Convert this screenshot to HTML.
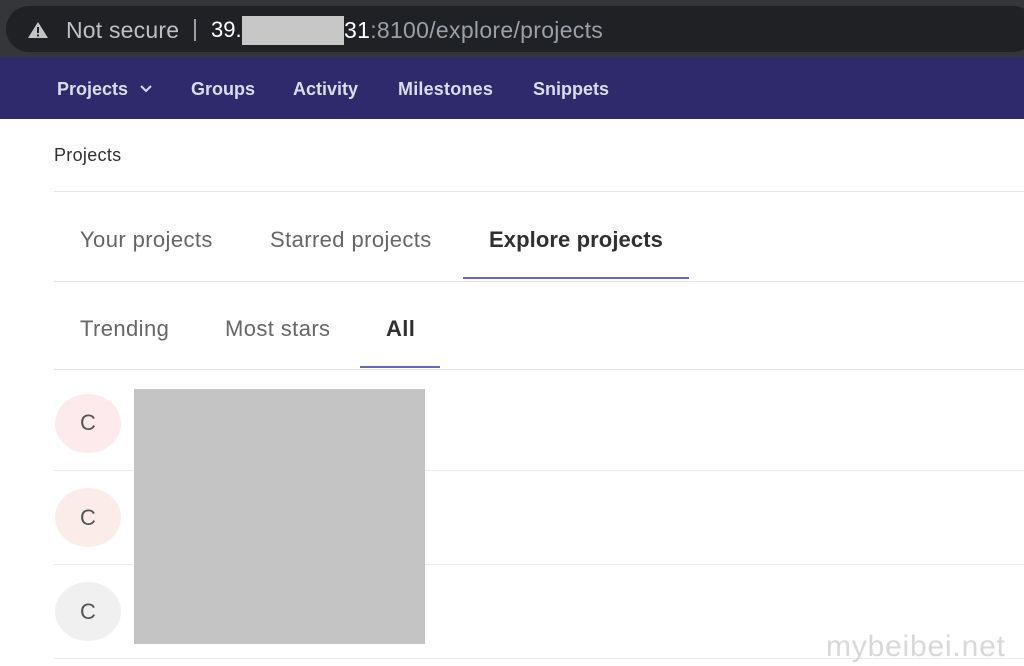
<!DOCTYPE html>
<html><head><style>
*{margin:0;padding:0;box-sizing:border-box}
body{width:1024px;height:666px;overflow:hidden;background:#fff;font-family:"Liberation Sans",sans-serif;position:relative}
.a{position:absolute}
.t{position:absolute;white-space:nowrap}
.tab{font-size:22px;letter-spacing:0.4px}
</style></head><body>
<div class="a" style="left:0;top:0;width:1024px;height:57px;background:#35363a"></div>
<div class="a" style="left:6px;top:6px;width:1030px;height:46px;background:#202124;border-radius:23px"></div>
<svg class="a" style="left:27px;top:21px" width="22" height="18" viewBox="0 0 22 18"><path d="M11 1L21 17H1Z" fill="#c4c4c4"/><rect x="10" y="6" width="2" height="6" fill="#202124"/><rect x="10" y="13.5" width="2" height="2" fill="#202124"/></svg>
<div class="t" style="left:66px;top:17px;font-size:23px;color:#bdc1c6;letter-spacing:0.2px">Not secure</div>
<div class="a" style="left:194px;top:19px;width:2px;height:22px;background:#9aa0a6"></div>
<div class="t" style="left:211px;top:17px;font-size:22px;color:#fff">39.</div>
<div class="a" style="left:242px;top:16px;width:102px;height:29px;background:#c7c7c7"></div>
<div class="t" style="left:344px;top:17px;font-size:23px;color:#fff;letter-spacing:0.3px">31<span style="color:#9aa0a6">:8100/explore/projects</span></div>
<div class="a" style="left:0;top:57px;width:1024px;height:62px;background:#2f2a6b"></div>
<div class="t" style="left:57px;top:79px;font-size:18px;font-weight:bold;color:#dcdcf0">Projects</div>
<svg class="a" style="left:139px;top:84px" width="14" height="10"><path d="M2 2L7 7L12 2" stroke="#dcdcf0" stroke-width="2" fill="none"/></svg>
<div class="t" style="left:191px;top:79px;font-size:18px;font-weight:bold;color:#dcdcf0">Groups</div>
<div class="t" style="left:293px;top:79px;font-size:18px;font-weight:bold;color:#dcdcf0">Activity</div>
<div class="t" style="left:398px;top:79px;font-size:18px;font-weight:bold;color:#dcdcf0;letter-spacing:0.2px">Milestones</div>
<div class="t" style="left:533px;top:79px;font-size:18px;font-weight:bold;color:#dcdcf0">Snippets</div>
<div class="t" style="left:54px;top:145px;font-size:18px;color:#303030;letter-spacing:0.3px">Projects</div>
<div class="a" style="left:54px;top:191px;width:970px;height:1px;background:#e5e5e5"></div>
<div class="t tab" style="left:80px;top:227px;color:#666">Your projects</div>
<div class="t tab" style="left:270px;top:227px;color:#666">Starred projects</div>
<div class="t tab" style="left:489px;top:227px;font-weight:bold;color:#303030;letter-spacing:0.1px">Explore projects</div>
<div class="a" style="left:463px;top:277px;width:226px;height:2px;background:#6666c4"></div>
<div class="a" style="left:54px;top:281px;width:970px;height:1px;background:#e5e5e5"></div>
<div class="t tab" style="left:80px;top:316px;color:#666">Trending</div>
<div class="t tab" style="left:225px;top:316px;color:#666">Most stars</div>
<div class="t tab" style="left:386px;top:316px;font-weight:bold;color:#303030">All</div>
<div class="a" style="left:360px;top:366px;width:80px;height:2px;background:#6666c4"></div>
<div class="a" style="left:54px;top:369px;width:970px;height:1px;background:#e5e5e5"></div>
<div class="a" style="left:54px;top:470px;width:970px;height:1px;background:#ececec"></div>
<div class="a" style="left:54px;top:564px;width:970px;height:1px;background:#ececec"></div>
<div class="a" style="left:54px;top:658px;width:970px;height:1px;background:#ececec"></div>
<div class="a" style="left:55px;top:394px;width:66px;height:59px;border-radius:50%;background:#fdeaec"></div>
<div class="a" style="left:55px;top:488px;width:66px;height:59px;border-radius:50%;background:#fbecea"></div>
<div class="a" style="left:55px;top:582px;width:66px;height:59px;border-radius:50%;background:#f0f0f0"></div>
<div class="t" style="left:80px;top:410px;font-size:22px;color:#555">C</div>
<div class="t" style="left:80px;top:505px;font-size:22px;color:#555">C</div>
<div class="t" style="left:80px;top:599px;font-size:22px;color:#555">C</div>
<div class="a" style="left:134px;top:389px;width:291px;height:255px;background:#c4c4c4"></div>
<div class="t" style="left:826px;top:630px;font-size:30px;color:#d8d8d8;letter-spacing:0.8px">mybeibei.net</div>
</body></html>
